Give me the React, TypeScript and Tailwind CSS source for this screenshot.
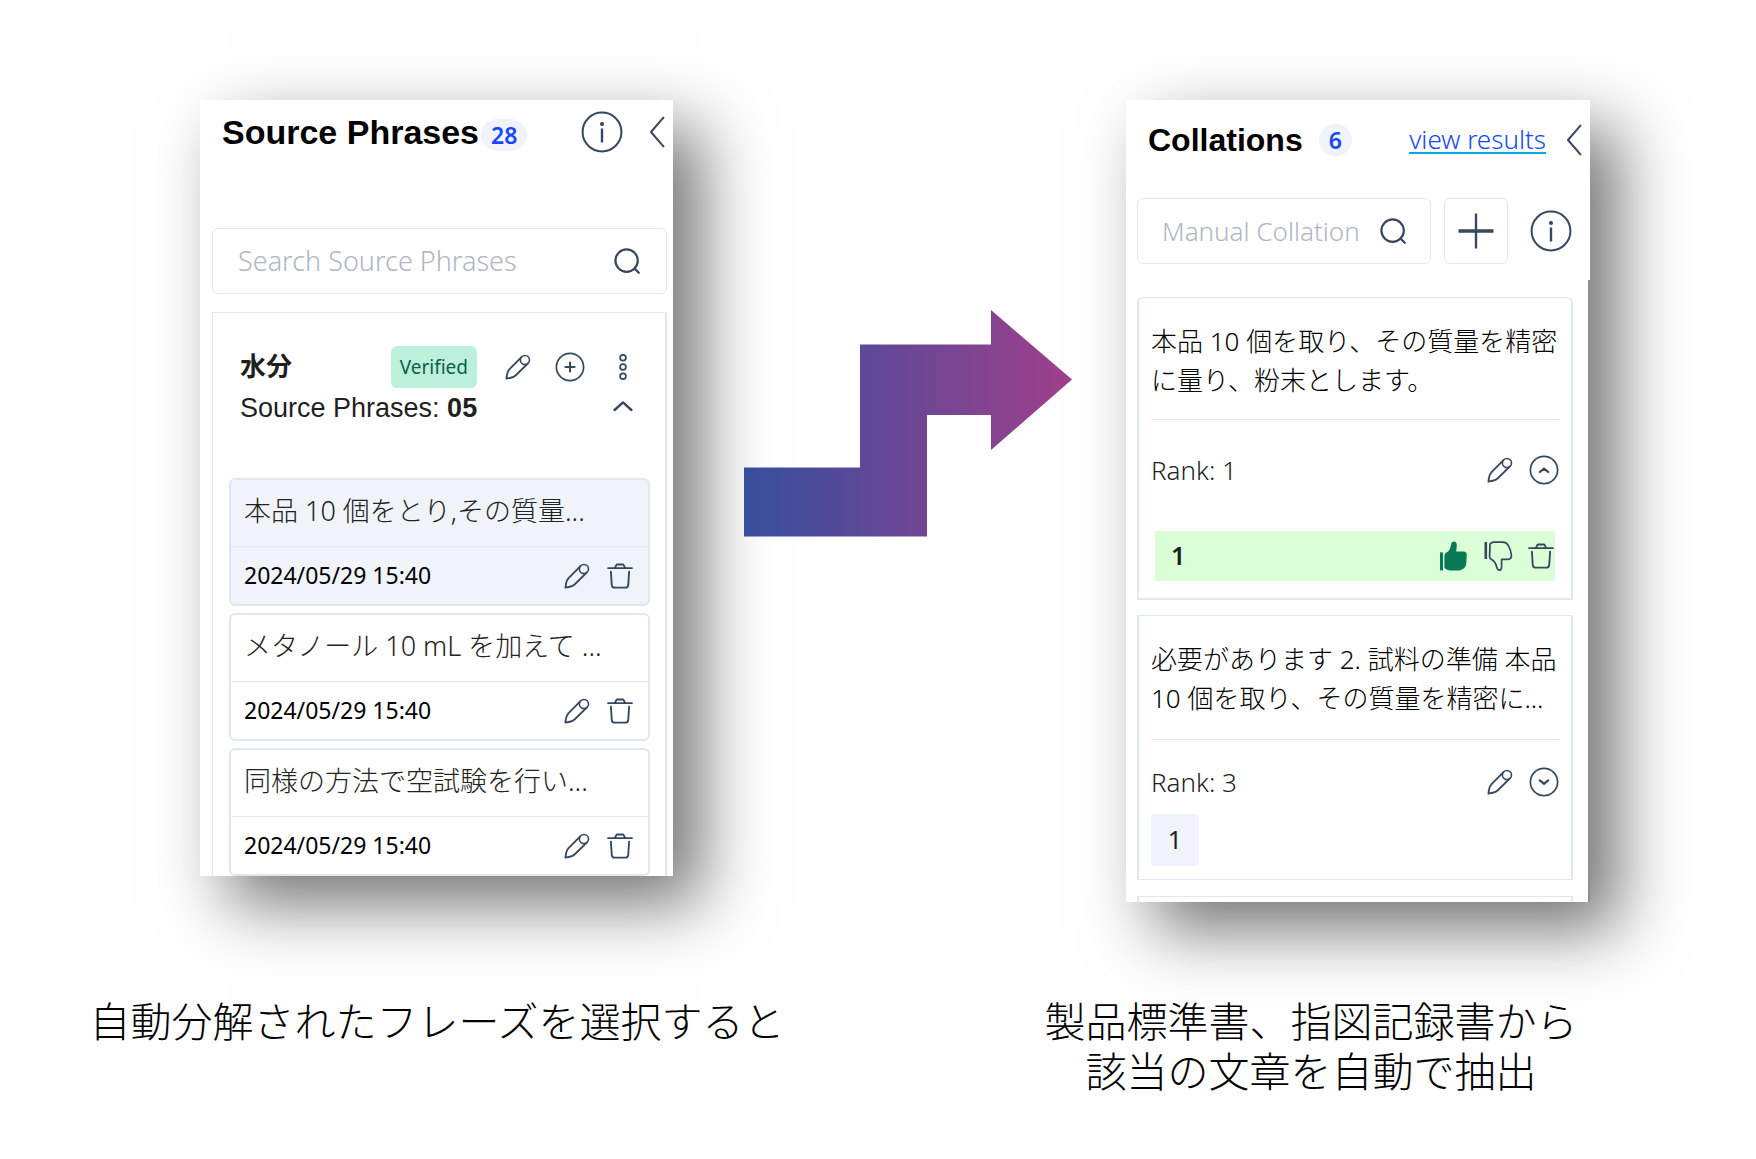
import type { ReactNode } from 'react';

type Phrase = { id: number; text: string; date: string; selected?: boolean };

const PHRASES: Phrase[] = [
  { id: 1, text: '本品 10 個をとり,その質量...', date: '2024/05/29 15:40', selected: true },
  { id: 2, text: 'メタノール 10 mL を加えて ...', date: '2024/05/29 15:40' },
  { id: 3, text: '同様の方法で空試験を行い...', date: '2024/05/29 15:40' },
];

const HEAD = "font-['Liberation_Sans','Noto_Sans_CJK_JP',sans-serif]";
const UI = "font-['Noto_Sans','Noto_Sans_CJK_JP',sans-serif]";

/* ---------- icons ---------- */

function Icon({ className, box = '0 0 24 24', children }: { className: string; box?: string; children: ReactNode }) {
  return (
    <svg
      viewBox={box}
      className={`block shrink-0 ${className}`}
      fill="none"
      stroke="currentColor"
      strokeWidth="1.7"
      strokeLinecap="round"
      strokeLinejoin="round"
      aria-hidden="true"
    >
      {children}
    </svg>
  );
}

const PencilIcon = () => (
  <Icon className="size-[26px]">
    <circle cx="18.4" cy="5.6" r="4.2" strokeWidth="1.5" />
    <path d="M15.2 2.9 4.2 14Q2.4 16 1.900 18.800L1.300 22.700 5.400 21.900Q8 21.400 10 19.600L21.200 8.700" />
  </Icon>
);

const TrashIcon = () => (
  <Icon className="size-[26px]">
    <path d="M1 4.8h22" />
    <path d="M7.2 4.6 8.6 2Q8.8 1.4 9.6 1.4h4.8q.8 0 1 .6l1.4 2.6" />
    <path d="m3.6 8 .8 12.4q.3 2.4 2.6 2.4h10q2.3 0 2.6-2.4L20.4 8" />
  </Icon>
);

const InfoIcon = () => (
  <Icon className="size-[42px]" box="0 0 42 42">
    <circle cx="21" cy="21" r="19.4" strokeWidth="2" />
    <path d="M21 17.5v14" strokeWidth="2.4" strokeLinecap="butt" />
    <circle cx="21" cy="13" r="1.2" fill="currentColor" />
  </Icon>
);

const BackIcon = () => (
  <Icon className="h-8 w-4" box="0 0 16 32">
    <path d="M14.400 1.600 2 16l12.400 14.400" strokeWidth="2" />
  </Icon>
);

const SearchIcon = () => (
  <Icon className="size-[26px]" box="0 0 26 26">
    <circle cx="12.6" cy="12.6" r="11.2" strokeWidth="2.2" />
    <path d="m20.6 20.6 4.2 4.2" strokeWidth="2.2" />
  </Icon>
);

const PlusCircleIcon = () => (
  <Icon className="size-[30px]" box="0 0 30 30">
    <circle cx="15" cy="15" r="13.6" />
    <path d="M15 10.4v9.2M10.4 15h9.2" strokeWidth="2" />
  </Icon>
);

const DotsIcon = () => (
  <Icon className="size-7" box="0 0 28 28">
    <circle cx="14" cy="4.8" r="2.9" />
    <circle cx="14" cy="14" r="2.9" />
    <circle cx="14" cy="23.2" r="2.9" />
  </Icon>
);

const ChevronUpIcon = () => (
  <Icon className="size-5" box="0 0 20 20">
    <path d="M1.600 12 10 4.400l8.400 7.600" strokeWidth="2.4" />
  </Icon>
);

const RankToggleIcon = ({ open }: { open: boolean }) => (
  <Icon className="size-[30px]" box="0 0 30 30">
    <circle cx="15" cy="15" r="13.6" />
    <path d={open ? 'm10.8 17 4.2-3.4 4.2 3.4' : 'm10.8 13.4 4.2 3.4 4.2-3.4'} strokeWidth="2.2" />
  </Icon>
);

const ThumbUpIcon = () => (
  <Icon className="size-[30px] text-[#077a55]" box="0 0 30 30">
    <path d="M2 11.400h3v18H2z" fill="currentColor" stroke="none" />
    <path
      d="M6.400 14.600Q6.400 12.400 8.400 11.600Q11.400 10 12.400 6.400L13.400 2.200Q14 .4 15.800.4Q18.800.6 18.800 4.400L18.200 10.400H25.600Q28.800 10.600 28.800 14L28.200 23Q27.800 26.600 24.400 28.200Q22.800 29.400 20.200 29.400H11.600Q9.200 29.200 6.400 27Z"
      fill="currentColor"
      stroke="none"
    />
  </Icon>
);

const ThumbDownIcon = () => (
  <Icon className="size-[30px]" box="0 0 30 30">
    <path d="M2.800 1v17" strokeWidth="2.600" strokeLinecap="butt" />
    <path d="M7 3Q8.600 1.200 11 1.200H19.600Q23.800 1.400 25.400 4.600Q28.200 9.600 28.400 14.400Q28.400 18 25 18.400H18.600V25.400Q18.600 29 16.400 29.200Q14.600 29.200 13.800 26.600Q12.800 21 8.600 18.600Q6.600 17.600 6.600 15.600Z" />
  </Icon>
);

const PlusIcon = () => (
  <Icon className="size-9" box="0 0 36 36">
    <path d="M18 .5v35" strokeWidth="2.4" strokeLinecap="butt" />
    <path d="M.5 18h35" strokeWidth="3.4" strokeLinecap="butt" />
  </Icon>
);

/* ---------- shared pieces ---------- */

function IconButton({ label, children }: { label: string; children: ReactNode }) {
  return (
    <button type="button" aria-label={label} className="flex shrink-0 items-center justify-center text-[#36475f]">
      {children}
    </button>
  );
}

function Panel({ className, children }: { className: string; children: ReactNode }) {
  return (
    <section
      className={`flex shrink-0 flex-col overflow-hidden bg-white shadow-[28px_28px_64px_rgba(0,0,0,0.55)] ${className}`}
    >
      {children}
    </section>
  );
}

function CountBadge({ count }: { count: number }) {
  return (
    <span className={`${UI} rounded-full bg-[#f0f3f9] px-2.5 text-[23px]/[34px] font-semibold text-[#1447ff]`}>
      {count}
    </span>
  );
}

function SearchBox({ label, className }: { label: string; className: string }) {
  return (
    <div className={`flex h-[66px] items-center rounded-md border border-[#e1e7f0] ${className}`}>
      <input
        type="text"
        aria-label={label}
        placeholder={label}
        className={`${UI} min-w-0 flex-1 bg-transparent font-light text-[#1f1f1f] outline-none placeholder:text-[#aeb6c2]`}
      />
      <IconButton label="Search">
        <SearchIcon />
      </IconButton>
    </div>
  );
}

/* ---------- left panel ---------- */

function PhraseItem({ phrase }: { phrase: Phrase }) {
  return (
    <li className={`rounded-md border-2 border-[#e1e7f0] ${phrase.selected ? 'bg-[#f0f3f9]' : 'bg-white'}`}>
      <p className={`${UI} h-[66px] px-[13px] text-[27px]/[62px] font-light whitespace-nowrap text-[#222]`}>
        {phrase.text}
      </p>
      <div className="flex h-[58px] items-center gap-[17px] border-t border-[#e1e7f0] pr-[15px] pl-[13px]">
        <time className={`${UI} flex-1 text-[23px] text-black`}>{phrase.date}</time>
        <IconButton label="Edit phrase">
          <PencilIcon />
        </IconButton>
        <IconButton label="Delete phrase">
          <TrashIcon />
        </IconButton>
      </div>
    </li>
  );
}

function SourcePhrases() {
  return (
    <Panel className="h-[776px] w-[473px]">
      <header className="flex h-16 shrink-0 items-center pr-2 pl-[22px]">
        <h2 className={`${HEAD} text-[34px] font-bold whitespace-nowrap text-black`}>Source Phrases</h2>
        <div className="mt-1.5 ml-0.5">
          <CountBadge count={28} />
        </div>
        <div className="ml-auto flex items-center gap-[26px]">
          <IconButton label="About source phrases">
            <InfoIcon />
          </IconButton>
          <IconButton label="Collapse panel">
            <BackIcon />
          </IconButton>
        </div>
      </header>

      <SearchBox label="Search Source Phrases" className="mt-16 mr-1.5 ml-3 shrink-0 pr-[26px] pl-[25px] text-[27px]" />

      <div className="mt-[18px] mr-1.5 ml-3 flex-1 border border-r-2 border-b-0 border-[#e1e7f0] pr-[15px] pl-4">
        <div className="mt-[33px] flex h-[42px] items-center pl-[11px]">
          <h3 className={`${HEAD} flex-1 text-[26px] font-bold text-[#1f1f1f]`}>水分</h3>
          <span className={`${UI} rounded-md bg-[#bdf0db] px-[9px] text-[19px]/[42px] text-[#0b5f4c]`}>Verified</span>
          <div className="ml-7 flex items-center gap-6 pr-[13px]">
            <IconButton label="Edit group">
              <PencilIcon />
            </IconButton>
            <IconButton label="Add phrase">
              <PlusCircleIcon />
            </IconButton>
            <IconButton label="More actions">
              <DotsIcon />
            </IconButton>
          </div>
        </div>
        <div className="flex h-10 items-center justify-between pr-[17px] pl-[11px]">
          <p className={`${HEAD} text-[27px] text-[#1f1f1f]`}>
            Source Phrases: <b>05</b>
          </p>
          <IconButton label="Collapse group">
            <ChevronUpIcon />
          </IconButton>
        </div>
        <ul className="mt-[50px] flex flex-col gap-[7px]">
          {PHRASES.map((p) => (
            <PhraseItem key={p.id} phrase={p} />
          ))}
        </ul>
      </div>
    </Panel>
  );
}

/* ---------- right panel ---------- */

function CollationText({ lines }: { lines: string[] }) {
  return (
    <p className={`${UI} text-[26px]/[39px] font-light whitespace-nowrap text-black`}>
      {lines.map((line) => (
        <span key={line} className="block">
          {line}
        </span>
      ))}
    </p>
  );
}

function RankRow({ rank, open }: { rank: number; open: boolean }) {
  return (
    <div className="flex h-10 items-center gap-4">
      <p className={`${UI} flex-1 text-[26px] font-light text-[#1f1f1f]`}>Rank: {rank}</p>
      <IconButton label="Edit collation">
        <PencilIcon />
      </IconButton>
      <IconButton label={open ? 'Hide matches' : 'Show matches'}>
        <RankToggleIcon open={open} />
      </IconButton>
    </div>
  );
}

function Collations() {
  return (
    <Panel className="h-[802px] w-[464px]">
      <header className="flex h-20 shrink-0 items-center pr-2 pl-[22px]">
        <h2 className={`${HEAD} text-[32px] font-bold text-black`}>Collations</h2>
        <div className="ml-4">
          <CountBadge count={6} />
        </div>
        <a
          href="#results"
          className={`${UI} ml-auto border-b-2 border-[#00a9e6] text-[26px]/[26px] font-light whitespace-nowrap text-[#1447ff]`}
        >
          view results
        </a>
        <div className="ml-5 flex">
          <IconButton label="Collapse panel">
            <BackIcon />
          </IconButton>
        </div>
      </header>

      <div className="mt-[18px] flex shrink-0 items-center pr-[18px] pl-[11px]">
        <SearchBox label="Manual Collation" className="min-w-0 flex-1 pr-6 pl-6 text-[26px]" />
        <button
          type="button"
          aria-label="Add collation"
          className="mr-[22px] ml-[13px] flex h-[66px] w-16 shrink-0 items-center justify-center rounded-md border border-[#e1e7f0] text-[#36475f]"
        >
          <PlusIcon />
        </button>
        <IconButton label="About collations">
          <InfoIcon />
        </IconButton>
      </div>

      <div className="mt-4 flex min-h-0 flex-1 flex-col overflow-hidden border-r-2 border-[#8f8f8f] pt-[17px] pr-[15px] pl-[11px]">
        <article className="h-[303px] shrink-0 rounded-t-md border-2 border-t border-[#e1e7f0] px-3 pt-6">
          <CollationText lines={['本品 10 個を取り、その質量を精密', 'に量り、粉末とします。']} />
          <hr className="mt-[19px] mb-[30px] border-[#e1e7f0]" />
          <RankRow rank={1} open />
          <div className="mx-1 mt-[41px] flex h-[50px] items-center bg-[#dbffd6] pr-px pl-4 text-[#36475f]">
            <span className={`${UI} flex-1 text-[25px] font-semibold text-[#1f1f1f]`}>1</span>
            <div className="flex items-center gap-[15px]">
              <IconButton label="Accept match">
                <ThumbUpIcon />
              </IconButton>
              <IconButton label="Reject match">
                <ThumbDownIcon />
              </IconButton>
              <IconButton label="Delete match">
                <TrashIcon />
              </IconButton>
            </div>
          </div>
        </article>

        <article className="mt-[15px] h-[265px] shrink-0 border-2 border-y border-[#e1e7f0] px-3 pt-6">
          <CollationText lines={['必要があります 2. 試料の準備 本品', '10 個を取り、その質量を精密に...']} />
          <hr className="mt-[21px] mb-[22px] border-[#e1e7f0]" />
          <RankRow rank={3} open={false} />
          <span
            className={`${UI} mt-3 flex h-[52px] w-12 items-center justify-center rounded-sm bg-[#f0f4fa] text-[25px] text-[#1f1f1f]`}
          >
            1
          </span>
        </article>

        <article className="mt-4 h-40 shrink-0 border-2 border-y border-[#e1e7f0]" />
      </div>
    </Panel>
  );
}

/* ---------- page ---------- */

function StepArrow() {
  return (
    <svg viewBox="0 0 328 227" className="mt-[210px] h-[227px] w-[328px] shrink-0" aria-hidden="true">
      <defs>
        <linearGradient id="step" x1="0" x2="1" y1="0" y2="0">
          <stop offset="0" stopColor="#364f9e" />
          <stop offset="1" stopColor="#a03f8b" />
        </linearGradient>
      </defs>
      <path d="M0 157.500H116V34.500H247V0L328 69.500 247 140V105H183V226.500H0Z" fill="url(#step)" />
    </svg>
  );
}

export default function App() {
  return (
    <main className="min-h-screen overflow-hidden bg-white pt-25 pb-16">
      <div className="flex items-start justify-center pl-[34px]">
        <SourcePhrases />
        <div className="mr-[54px] ml-[71px]">
          <StepArrow />
        </div>
        <Collations />
      </div>
      <div className="relative mt-[92px] grid grid-cols-2 pr-2 text-center font-['Noto_Sans_CJK_JP',sans-serif] text-[41px]/[50px] font-light text-black">
        <p>自動分解されたフレーズを選択すると</p>
        <p>
          製品標準書、指図記録書から
          <br />
          該当の文章を自動で抽出
        </p>
      </div>
    </main>
  );
}
